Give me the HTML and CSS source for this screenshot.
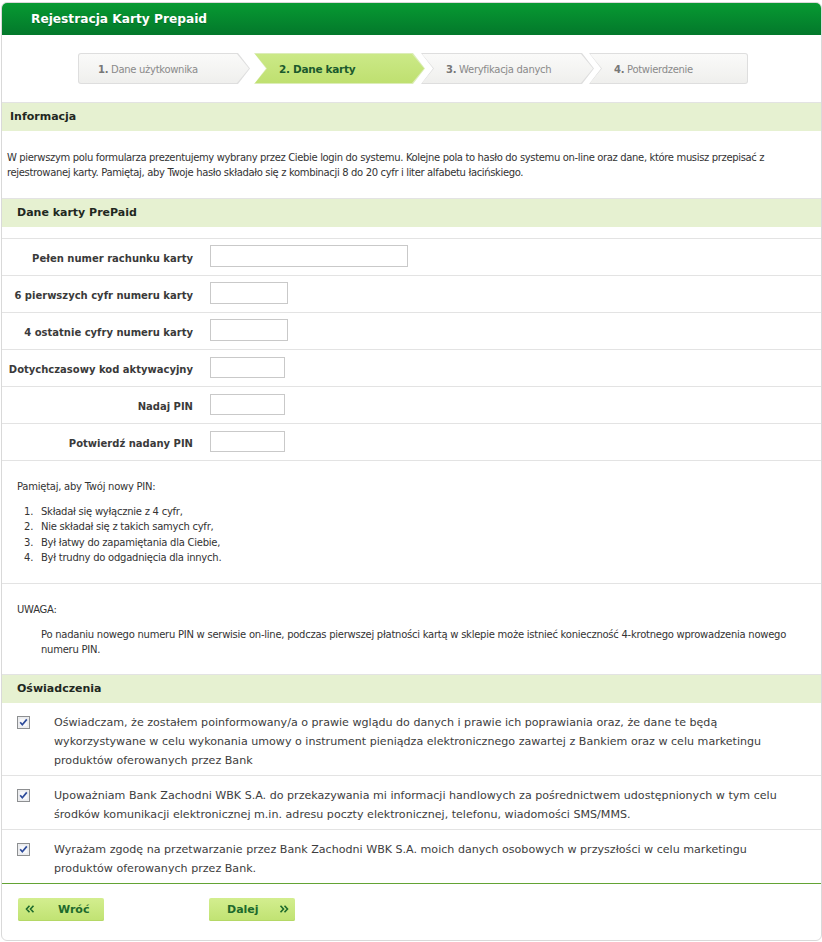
FILE: index.html
```html
<!DOCTYPE html>
<html lang="pl">
<head>
<meta charset="utf-8">
<title>Rejestracja Karty Prepaid</title>
<link rel="stylesheet" href="styles.css">
</head>
<body>
<div class="panel">
  <div class="panel-head">Rejestracja Karty Prepaid</div>

  <div class="steps">
    <div class="step step-first"><span class="step-text"><b>1.</b> Dane użytkownika</span></div>
    <div class="step step-active step-mid"><span class="step-text"><b>2. Dane karty</b></span></div>
    <div class="step step-mid step-third"><span class="step-text"><b>3.</b> Weryfikacja danych</span></div>
    <div class="step step-last"><span class="step-text"><b>4.</b> Potwierdzenie</span></div>
  </div>

  <div class="section-title section-title-info">Informacja</div>
  <p class="info">W pierwszym polu formularza prezentujemy wybrany przez Ciebie login do systemu. Kolejne pola to hasło do systemu on-line oraz dane, które musisz przepisać z<br>rejestrowanej karty. Pamiętaj, aby Twoje hasło składało się z kombinacji 8 do 20 cyfr i liter alfabetu łacińskiego.</p>

  <div class="section-title">Dane karty PrePaid</div>
  <div class="form">
    <div class="form-row"><label class="form-label">Pełen numer rachunku karty</label><input class="field field-long" type="text"></div>
    <div class="form-row"><label class="form-label">6 pierwszych cyfr numeru karty</label><input class="field field-mid" type="text"></div>
    <div class="form-row"><label class="form-label">4 ostatnie cyfry numeru karty</label><input class="field field-mid" type="text"></div>
    <div class="form-row"><label class="form-label">Dotychczasowy kod aktywacyjny</label><input class="field field-short" type="text"></div>
    <div class="form-row"><label class="form-label">Nadaj PIN</label><input class="field field-short" type="text"></div>
    <div class="form-row"><label class="form-label">Potwierdź nadany PIN</label><input class="field field-short" type="text"></div>
  </div>

  <div class="note">
    <p class="note-lead">Pamiętaj, aby Twój nowy PIN:</p>
    <ol class="pin-list">
      <li>Składał się wyłącznie z 4 cyfr,</li>
      <li>Nie składał się z takich samych cyfr,</li>
      <li>Był łatwy do zapamiętania dla Ciebie,</li>
      <li>Był trudny do odgadnięcia dla innych.</li>
    </ol>
  </div>

  <div class="note">
    <p class="note-lead">UWAGA:</p>
    <p class="note-body">Po nadaniu nowego numeru PIN w serwisie on-line, podczas pierwszej płatności kartą w sklepie może istnieć konieczność 4-krotnego wprowadzenia nowego<br>numeru PIN.</p>
  </div>

  <div class="section-title">Oświadczenia</div>
  <div class="consents">
    <div class="consent">
      <svg class="checkbox" width="13" height="13" viewBox="0 0 13 13"><rect x="0.5" y="0.5" width="12" height="12" fill="#f3f3f3" stroke="#8d8f91"/><rect x="1.5" y="1.5" width="10" height="10" fill="#e4e6ea"/><rect x="2.5" y="2.5" width="8" height="8" fill="#f7f8fa"/><path d="M3.2 6.3 L5.3 8.8 L9.8 3.4" fill="none" stroke="#2c4a9a" stroke-width="1.7"/></svg>
      <p class="consent-text">Oświadczam, że zostałem poinformowany/a o prawie wglądu do danych i prawie ich poprawiania oraz, że dane te będą<br>wykorzystywane w celu wykonania umowy o instrument pieniądza elektronicznego zawartej z Bankiem oraz w celu marketingu<br>produktów oferowanych przez Bank</p>
    </div>
    <div class="consent">
      <svg class="checkbox" width="13" height="13" viewBox="0 0 13 13"><rect x="0.5" y="0.5" width="12" height="12" fill="#f3f3f3" stroke="#8d8f91"/><rect x="1.5" y="1.5" width="10" height="10" fill="#e4e6ea"/><rect x="2.5" y="2.5" width="8" height="8" fill="#f7f8fa"/><path d="M3.2 6.3 L5.3 8.8 L9.8 3.4" fill="none" stroke="#2c4a9a" stroke-width="1.7"/></svg>
      <p class="consent-text">Upoważniam Bank Zachodni WBK S.A. do przekazywania mi informacji handlowych za pośrednictwem udostępnionych w tym celu<br>środków komunikacji elektronicznej m.in. adresu poczty elektronicznej, telefonu, wiadomości SMS/MMS.</p>
    </div>
    <div class="consent">
      <svg class="checkbox" width="13" height="13" viewBox="0 0 13 13"><rect x="0.5" y="0.5" width="12" height="12" fill="#f3f3f3" stroke="#8d8f91"/><rect x="1.5" y="1.5" width="10" height="10" fill="#e4e6ea"/><rect x="2.5" y="2.5" width="8" height="8" fill="#f7f8fa"/><path d="M3.2 6.3 L5.3 8.8 L9.8 3.4" fill="none" stroke="#2c4a9a" stroke-width="1.7"/></svg>
      <p class="consent-text">Wyrażam zgodę na przetwarzanie przez Bank Zachodni WBK S.A. moich danych osobowych w przyszłości w celu marketingu<br>produktów oferowanych przez Bank.</p>
    </div>
  </div>

  <div class="actions">
    <button class="btn btn-back" type="button">
      <svg class="chev" width="10" height="8" viewBox="0 0 10 8"><path d="M4.5 0.8 L1.5 4 L4.5 7.2 M8.5 0.8 L5.5 4 L8.5 7.2" fill="none" stroke="#1d6a2c" stroke-width="1.6"/></svg>
      <span>Wróć</span>
    </button>
    <button class="btn btn-next" type="button">
      <span>Dalej</span>
      <svg class="chev" width="10" height="8" viewBox="0 0 10 8"><path d="M1.5 0.8 L4.5 4 L1.5 7.2 M5.5 0.8 L8.5 4 L5.5 7.2" fill="none" stroke="#1d6a2c" stroke-width="1.6"/></svg>
    </button>
  </div>
</div>
</body>
</html>
```

FILE: styles.css
```css
* { box-sizing: border-box; }

body {
  margin: 0;
  background: #fff;
  font-family: "DejaVu Sans", "Verdana", sans-serif;
  font-size: 10px;
  color: #333;
}

p { margin: 0; }

.panel {
  margin: 2px 0 0 1px;
  width: 821px;
  border: 1px solid #d9d9d9;
  border-radius: 6px;
  overflow: hidden;
  background: #fff;
}

.panel-head {
  height: 32px;
  line-height: 32px;
  padding-left: 29px;
  background: linear-gradient(#079a32, #03782b);
  color: #fff;
  font-weight: bold;
  font-size: 12.2px;
  text-shadow: 0 1px 0 rgba(0, 60, 20, 0.35);
}

/* ---------- steps ---------- */
.steps {
  display: flex;
  padding: 18px 0 18px 76px;
}

.step {
  position: relative;
  height: 31px;
  line-height: 31px;
  background: #dedede;
  color: #8a8a8a;
  font-size: 10px;
  letter-spacing: -0.3px;
  z-index: 0;
}

.step::before {
  content: "";
  position: absolute;
  inset: 1px;
  z-index: -1;
  background: linear-gradient(#fafaf9, #efefed);
}

.step b { color: #777; }

.step-text { display: block; padding-left: 25px; padding-top: 1px; }

.step-first {
  width: 172px;
  border-radius: 3px 0 0 3px;
  clip-path: polygon(0 0, calc(100% - 12px) 0, 100% 50%, calc(100% - 12px) 100%, 0 100%);
}
.step-first::before {
  border-radius: 2px 0 0 2px;
  clip-path: polygon(0 0, calc(100% - 12px) 0, 100% 50%, calc(100% - 12px) 100%, 0 100%);
}
.step-first .step-text { padding-left: 20px; }

.step-mid {
  width: 171px;
  margin-left: 4px;
  clip-path: polygon(0 0, calc(100% - 12px) 0, 100% 50%, calc(100% - 12px) 100%, 0 100%, 12px 50%);
}
.step-mid::before {
  clip-path: polygon(0 0, calc(100% - 12px) 0, 100% 50%, calc(100% - 12px) 100%, 0 100%, 12px 50%);
}

.step-third { width: 173px; margin-left: -4px; }

.step-last {
  width: 159px;
  margin-left: -5px;
  border-radius: 0 3px 3px 0;
  clip-path: polygon(0 0, 100% 0, 100% 100%, 0 100%, 12px 50%);
}
.step-last::before {
  border-radius: 0 2px 2px 0;
  clip-path: polygon(0 0, 100% 0, 100% 100%, 0 100%, 12px 50%);
}

.step-active {
  background: #dcedb8;
  color: #1b5a2d;
}
.step-active::before { background: linear-gradient(#cbe987, #bfe070); }
.step-active b { color: #1b5a2d; font-size: 10.5px; letter-spacing: -0.3px; }

/* ---------- section titles ---------- */
.section-title {
  height: 29px;
  line-height: 28px;
  border-top: 1px solid #e3e3e3;
  background: #e6f1d1;
  padding-left: 15px;
  font-weight: bold;
  font-size: 11px;
  color: #1f281f;
}
.section-title-info { padding-left: 8px; }

.info {
  padding: 19px 6px 18px 5px;
  line-height: 15px;
  letter-spacing: -0.35px;
  color: #333;
}

/* ---------- form ---------- */
.form { margin-top: 11px; }

.form-row {
  display: grid;
  grid-template-columns: 191px auto;
  column-gap: 17px;
  align-items: center;
  justify-items: start;
  height: 37px;
  border-top: 1px solid #e3e3e3;
}

.form-label {
  justify-self: end;
  font-weight: bold;
  color: #3a3a3a;
  padding-top: 2px;
}

.field {
  height: 22px;
  border: 1px solid #c9c9c9;
  background: #fff;
  margin: 0 0 3px;
  padding: 0 3px;
  font: inherit;
}
.field-long { width: 198px; }
.field-mid { width: 78px; }
.field-short { width: 75px; height: 21px; margin-bottom: 1px; }

/* ---------- notes ---------- */
.note {
  border-top: 1px solid #e3e3e3;
  padding: 18px 15px 17px;
  line-height: 15px;
  letter-spacing: -0.25px;
}

.note-lead { line-height: 15px; }

.pin-list {
  list-style: none;
  margin: 10px 0 0;
  padding: 0 0 0 7px;
  counter-reset: pin;
}
.pin-list li {
  counter-increment: pin;
  line-height: 15.4px;
}
.pin-list li::before {
  content: counter(pin) ".";
  display: inline-block;
  width: 17px;
}

.note-body {
  margin-top: 10px;
  padding-left: 24px;
  line-height: 15px;
}

/* ---------- consents ---------- */
.consent {
  display: flex;
  align-items: flex-start;
  padding: 10px 4px 5px 15px;
  gap: 24px;
}
.consent + .consent { border-top: 1px solid #e3e3e3; }

.checkbox { flex: none; margin-top: 3px; }

.consent-text {
  font-size: 11.1px;
  line-height: 19px;
  color: #3d3d3d;
}

/* ---------- actions ---------- */
.actions {
  display: flex;
  gap: 105px;
  border-top: 1px solid #63a334;
  padding: 14px 16px 19px;
}

.btn {
  display: flex;
  align-items: center;
  width: 86px;
  height: 23px;
  border: 0;
  border-radius: 2px;
  padding: 0;
  background: linear-gradient(#d3ee8f, #c0e272);
  box-shadow: inset 0 -1px 0 #b5d866;
  color: #1d6a2c;
  font-family: inherit;
  font-weight: bold;
  font-size: 11px;
}

.btn-back { padding-left: 7px; gap: 23px; }
.btn-next { padding-left: 18px; gap: 20px; }
```
